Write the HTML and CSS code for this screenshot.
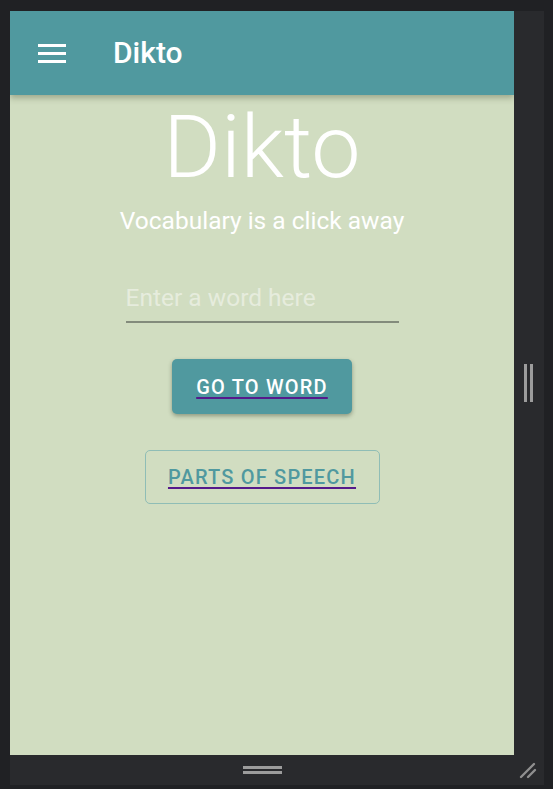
FILE: index.html
```html
<!DOCTYPE html>
<html lang="en">
<head>
<meta charset="utf-8">
<title>Dikto</title>
<link rel="stylesheet" href="styles.css">
</head>
<body>
<div class="frame">
  <div class="viewport">
    <header class="appbar">
      <button class="menu" aria-label="Menu">
        <svg width="28" height="19" viewBox="0 0 28 19"><rect x="0" y="0" width="28" height="3" fill="#fff"/><rect x="0" y="8" width="28" height="3" fill="#fff"/><rect x="0" y="16" width="28" height="3" fill="#fff"/></svg>
      </button>
      <span class="apptitle">Dikto</span>
    </header>
    <main class="home">
      <h1 class="hero">Dikto</h1>
      <p class="tagline">Vocabulary is a click away</p>
      <input class="word" type="text" placeholder="Enter a word here">
      <a class="link btn-raised" href="#"><span>GO TO WORD</span></a>
      <a class="link btn-outline" href="#"><span>PARTS OF SPEECH</span></a>
    </main>
  </div>
  <div class="side">
    <svg width="10" height="38" viewBox="0 0 10 38"><rect x="0" y="0" width="3" height="38" fill="#9c9c9c"/><rect x="6" y="0" width="3" height="38" fill="#9c9c9c"/></svg>
  </div>
  <div class="bottom">
    <svg width="39" height="8" viewBox="0 0 39 8"><rect x="0" y="0" width="39" height="3" fill="#9c9c9c"/><rect x="0" y="5" width="39" height="3" fill="#9c9c9c"/></svg>
  </div>
  <div class="corner">
    <svg width="18" height="18" viewBox="0 0 18 18"><path d="M2 16 L15 3 M9 16 L16 9" stroke="#8f8f8f" stroke-width="2.4" stroke-linecap="round"/></svg>
  </div>
</div>
</body>
</html>
```
FILE: styles.css
```css
html, body {
  margin: 0;
  padding: 0;
  background: #202124;
  height: 100%;
}
body {
  overflow: hidden;
}
.frame {
  margin: 11px 0 0 10px;
  width: 534px;
  height: 774px;
  background: #292a2d;
  display: grid;
  grid-template-columns: 504px 30px;
  grid-template-rows: 744px 30px;
}
.viewport {
  background: #d1ddc1;
  font-family: Roboto, "Noto Sans", sans-serif;
  display: flex;
  flex-direction: column;
  overflow: hidden;
}
.appbar {
  height: 84px;
  flex: none;
  background: #50999f;
  display: flex;
  align-items: center;
  padding-left: 28px;
  box-shadow: 0 3px 6px rgba(60, 70, 40, 0.35);
  position: relative;
  z-index: 1;
}
.menu {
  border: 0;
  background: none;
  padding: 0;
  width: 28px;
  height: 19px;
  display: block;
}
.menu svg { display: block; }
.apptitle {
  margin-left: 47px;
  color: #fff;
  font-weight: 500;
  font-size: 30px;
  line-height: 34px;
}
.home {
  display: flex;
  flex-direction: column;
  align-items: center;
}
.hero {
  margin: 8px 0 0;
  font-weight: 300;
  font-size: 88px;
  line-height: 88px;
  color: #fff;
}
.tagline {
  margin: 16px 0 0;
  font-size: 24.5px;
  line-height: 28px;
  color: #fff;
}
.word {
  margin-top: 44px;
  width: 273px;
  box-sizing: border-box;
  border: 0;
  border-bottom: 2px solid #838b7c;
  background: transparent;
  font-family: Roboto, sans-serif;
  font-size: 24.5px;
  line-height: 28px;
  padding: 5px 0 9px;
  color: #fff;
  outline: none;
}
.word::placeholder {
  color: #e6ecdd;
}
.link {
  display: flex;
  align-items: center;
  justify-content: center;
  box-sizing: border-box;
  border-radius: 5px;
  font-size: 20px;
  font-weight: 500;
  letter-spacing: 1.2px;
  text-decoration: underline;
  text-decoration-color: #551a8b;
  text-decoration-thickness: 2px;
  text-underline-offset: 3px;
}
.btn-raised {
  margin-top: 36px;
  width: 180px;
  height: 55px;
  background: #50999f;
  color: #fff;
  box-shadow: 0 2px 4px rgba(40, 50, 30, 0.4);
}
.btn-outline {
  margin-top: 36px;
  width: 235px;
  height: 54px;
  border: 1px solid #8fbdb6;
  color: #50999f;
}
.side {
  display: flex;
  align-items: center;
  justify-content: flex-start;
  padding-left: 10px;
}
.side svg { display: block; }
.bottom {
  display: flex;
  align-items: center;
  justify-content: center;
}
.corner {
  display: flex;
  align-items: center;
  justify-content: center;
  padding-right: 2px;
}
```
